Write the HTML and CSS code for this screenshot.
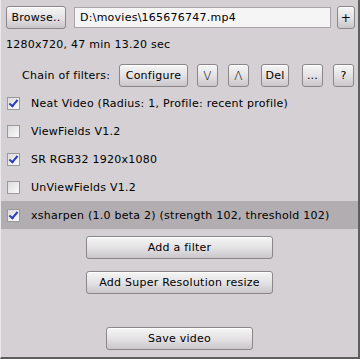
FILE: index.html
```html
<!DOCTYPE html>
<html lang="en">
<head>
    <meta charset="UTF-8">
    <title>Video Filters</title>
    <link rel="stylesheet" href="styles.css">
</head>
<body>
    <div class="window">
        <div class="file-row">
            <button class="btn browse-btn">Browse..</button>
            <input class="file-input" type="text" value="D:\movies\165676747.mp4">
            <button class="btn plus-btn">+</button>
        </div>
        <div class="info">1280x720, 47 min 13.20 sec</div>
        <div class="chain-row">
            <span class="chain-label">Chain of filters:</span>
            <button class="btn configure-btn">Configure</button>
            <button class="btn small-btn arrow">V</button>
            <button class="btn small-btn arrow">Λ</button>
            <button class="btn del-btn">Del</button>
            <button class="btn small-btn">...</button>
            <button class="btn small-btn">?</button>
        </div>
        <div class="filters">
            <div class="filter"><span class="check checked"></span>Neat Video (Radius: 1, Profile: recent profile)</div>
            <div class="filter"><span class="check"></span>ViewFields V1.2</div>
            <div class="filter"><span class="check checked"></span>SR RGB32 1920x1080</div>
            <div class="filter"><span class="check"></span>UnViewFields V1.2</div>
            <div class="filter selected"><span class="check checked"></span>xsharpen (1.0 beta 2) (strength 102, threshold 102)</div>
        </div>
        <div class="actions">
            <button class="btn wide-btn">Add a filter</button>
            <button class="btn wide-btn">Add Super Resolution resize</button>
            <button class="btn save-btn">Save video</button>
        </div>
    </div>
</body>
</html>
```

FILE: styles.css
```css
/* Basic layout of the filter window */
body {
    margin: 0;
    font-family: "DejaVu Sans", Verdana, sans-serif;
    font-size: 11px;
    letter-spacing: 0.25px;
    color: #000;
}

.window {
    width: 360px;
    height: 359px;
    box-sizing: border-box;
    background-color: #d4d0d4;
    border-left: 1px solid #ebe9eb;
    border-right: 2px solid #5e5e5e;
    border-bottom: 2px solid #5e5e5e;
}

.btn {
    font-family: inherit;
    font-size: 11px;
    letter-spacing: 0.25px;
    color: #000;
    height: 23px;
    padding: 0;
    box-sizing: border-box;
    border: 1px solid #8a868a;
    border-radius: 3px;
    background: linear-gradient(#f6f6f6, #e4e2e4 50%, #c9c7c9);
    box-shadow: inset 0 1px 0 #fff;
}

.file-row {
    display: flex;
    align-items: center;
    padding: 6px 0 0 5px;
}

.browse-btn {
    width: 60px;
}

.file-input {
    width: 257px;
    height: 21px;
    margin-left: 8px;
    box-sizing: border-box;
    border: 1px solid #a8a4a8;
    background-color: #f5f5f5;
    font-family: inherit;
    font-size: 11px;
    letter-spacing: 0.25px;
    padding: 0 0 0 5px;
}

.plus-btn {
    width: 18px;
    margin-left: 6px;
    font-size: 12px;
}

.info {
    padding: 9px 0 0 5px;
    height: 17px;
}

.chain-row {
    display: flex;
    align-items: center;
    padding: 9px 0 0 21px;
}

.chain-label {
    width: 97px;
}

.configure-btn {
    width: 69px;
}

.small-btn {
    width: 21px;
    margin-left: 10px;
}

.small-btn.arrow {
    font-weight: 300;
    font-size: 12px;
}

.del-btn {
    width: 28px;
    margin-left: 12px;
}

.chain-row .small-btn + .del-btn + .small-btn {
    margin-left: 13px;
}

.configure-btn + .small-btn {
    margin-left: 9px;
}

.filters {
    margin-top: 2px;
}

.filter {
    display: flex;
    align-items: center;
    height: 28px;
    padding-left: 6px;
}

.filter.selected {
    background-color: #b1adb1;
}

.check {
    width: 13px;
    height: 13px;
    box-sizing: border-box;
    border: 1px solid #9a989a;
    background: linear-gradient(135deg, #dcdcdc, #fafafa);
    margin-right: 11px;
    position: relative;
}

.check.checked::after {
    content: "";
    position: absolute;
    left: 3px;
    top: 0px;
    width: 3px;
    height: 7px;
    border-right: 2px solid #2a3cc0;
    border-bottom: 2px solid #2a3cc0;
    transform: rotate(40deg);
}

.actions {
    display: flex;
    flex-direction: column;
    align-items: center;
    padding-top: 7px;
}

.wide-btn {
    width: 187px;
    margin-bottom: 12px;
}

.save-btn {
    width: 147px;
    margin-top: 21px;
}
```
